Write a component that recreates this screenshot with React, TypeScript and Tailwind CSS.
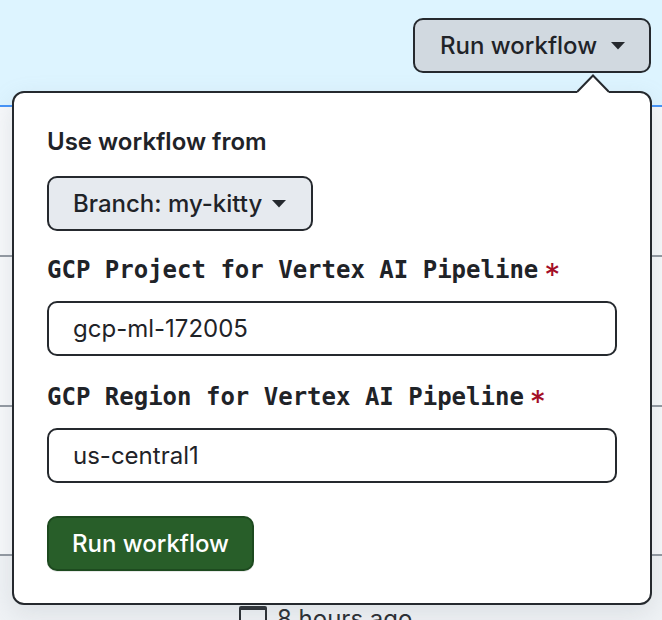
import React from "react";

const sans = { fontFamily: "Inter, 'Liberation Sans', sans-serif" };
const mono = { fontFamily: "'DejaVu Sans Mono', 'Liberation Mono', monospace" };

function Caret({ className = "" }: { className?: string }) {
  return (
    <svg width="14" height="8" viewBox="0 0 14 8" className={className}>
      <path d="M0 0 L14 0 L7 7.5 Z" fill="currentColor" />
    </svg>
  );
}

function Label({ text }: { text: string }) {
  return (
    <div className="h-[30px] flex items-start text-[24px] leading-[30px] font-bold" style={mono}>
      <span>{text}</span>
      <span
        className="relative top-[9px] text-[#a40e26] ml-[6px] text-[32px] leading-[24px] font-normal"
        style={sans}
      >
        *
      </span>
    </div>
  );
}

export default function App() {
  return (
    <div className="relative w-[662px] h-[620px] overflow-hidden bg-[#f6f8fa] text-[#1f2328]" style={sans}>
      {/* Top band */}
      <div className="h-[107px] bg-[#ddf4ff] border-b-2 border-[#4493f8] flex justify-end items-start pt-[18px] pr-[11px]">
        <button className="h-[55px] w-[238px] rounded-[10px] border-2 border-[#25292e] bg-[#d1d9e0] flex items-center justify-between pl-[25px] pr-[24px] text-[24px] font-medium">
          <span>Run workflow</span>
          <Caret className="text-[#25292e]" />
        </button>
      </div>
      {/* Background rows */}
      <div className="h-[150px] border-b-2 border-[#9198a1]" />
      <div className="h-[150px] border-b-2 border-[#9198a1]" />
      <div className="h-[149px] border-b-2 border-[#9198a1]" />
      <div className="h-[70px] bg-[#eff2f5] flex items-start pl-[239px] pt-[48px] gap-[10px]">
        <div className="w-[28px] h-[26px] border-2 border-t-4 border-[#25292e] rounded-[2px] mt-[2px]" />
        <span className="text-[24px] leading-[30px] text-[#25292e]">8 hours ago</span>
      </div>

      {/* Popover */}
      <div className="absolute left-[12px] top-[91px] w-[640px] h-[514px] rounded-[12px] border-2 border-[#25292e] bg-white shadow-[0_8px_24px_rgba(140,149,159,0.2)] pl-[33px] pt-[31px] flex flex-col">
        <div className="text-[24px] leading-[36px] font-semibold">Use workflow from</div>
        <div className="mt-[16px]">
          <button className="h-[55px] w-[266px] rounded-[10px] border-2 border-[#25292e] bg-[#e6eaef] flex items-center pl-[24px] gap-[10px] text-[24px] font-medium">
            <span>Branch: my-kitty</span>
            <Caret className="text-[#25292e]" />
          </button>
        </div>
        <div className="mt-[24px]">
          <Label text="GCP Project for Vertex AI Pipeline" />
        </div>
        <div className="mt-[16px] w-[570px] h-[55px] rounded-[10px] border-2 border-[#25292e] bg-white flex items-center pl-[24px] text-[24px]">
          gcp-ml-172005
        </div>
        <div className="mt-[26px]">
          <Label text="GCP Region for Vertex AI Pipeline" />
        </div>
        <div className="mt-[16px] w-[570px] h-[55px] rounded-[10px] border-2 border-[#25292e] bg-white flex items-center pl-[24px] text-[24px]">
          us-central1
        </div>
        <div className="mt-[33px]">
          <button className="h-[55px] w-[207px] rounded-[10px] border-2 border-[#1d4a1f] bg-[#285e29] text-white flex items-center justify-center text-[24px] font-medium shadow-[0_1px_0_rgba(31,35,40,0.1)]">
            Run workflow
          </button>
        </div>
      </div>

      {/* Caret of popover */}
      <svg className="absolute left-[577px] top-[74px]" width="32" height="21" viewBox="0 0 32 21">
        <polygon points="0,18 16,1.5 32,18 32,21 0,21" fill="white" />
        <polyline points="0,18 16,1.5 32,18" fill="none" stroke="#25292e" strokeWidth="2" />
      </svg>
    </div>
  );
}
